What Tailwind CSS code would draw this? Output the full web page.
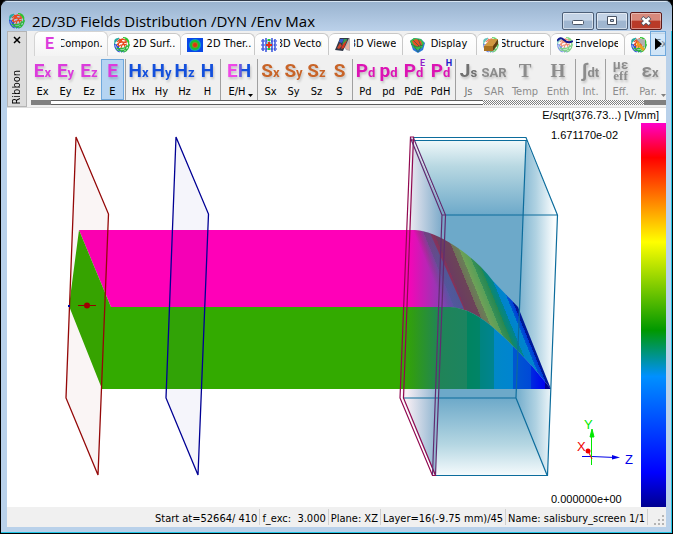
<!DOCTYPE html>
<html lang="en">
<head>
    <meta charset="UTF-8">
    <meta name="viewport" content="width=device-width, initial-scale=1.0">
    <title>2D/3D Fields Distribution</title>
    <script src="https://cdn.jsdelivr.net/npm/@tailwindcss/browser@4"></script>
</head>
<body class="bg-black">
    <!-- shared icons -->
    <svg class="hidden">
        <symbol id="mesh" viewBox="0 0 16 16">
            <g fill="none" stroke-width="1.2">
                <path d="M1 6Q0 2 4 1.500M1 5l4-4M0.500 8q0-4 3-5" stroke="#28a8a0"/>
                <path d="M9 .6q5 0 6 5M11 2q4 2 4 7" stroke="#2fc42f"/>
                <path d="M3 5Q7 0 12 3.500M3 8Q6 3 13 6M4 10Q8 6 13 8M5 2q5 3 6 8M9 2Q4 4 4 10M13 4Q8 6 7 11" stroke="#e8481c"/>
                <path d="M.7 7q0 6 5 8M2 7q1 5 6 8M4 9q1 5 6 6" stroke="#2a50d8"/>
                <path d="M15 7q0 6-5 8M13 8q-1 5-6 7M3 13q5 1 10-1M2 11q6 2 12-2" stroke="#2cb83c"/>
            </g>
        </symbol>
    </svg>

    <div class="min-h-screen flex flex-col rounded-t-lg border border-black border-t-[#303a48] bg-[#b9d1ea] shadow-[inset_-1px_-1px_0_#20c4e4] overflow-hidden font-['DejaVu_Sans_Condensed','DejaVu_Sans',sans-serif] text-[11px] text-black">

        <header class="h-[30px] shrink-0 flex items-center px-2 bg-linear-to-b from-[#9ab4d0] to-[#bbd1ea] border-t border-[#d6e4f2]">
            <svg class="w-4 h-4 mt-2 shrink-0"><use href="#mesh"/></svg>
            <h1 class="ml-[7px] mt-2 flex-1 whitespace-nowrap font-[Open_Sans] text-[15px] leading-5">2D/3D Fields Distribution /DYN /Env Max</h1>
            <div class="flex gap-[2px] mt-2 mr-[2px]">
                <button aria-label="Minimize" class="w-8 h-[18px] rounded-xs border border-[#4c5f78] bg-linear-to-b from-[#c3d3e6] from-45% to-[#9fb6d0] to-50% inset-ring inset-ring-white/50 flex items-center justify-center">
                    <svg class="w-3 h-3" viewBox="0 0 12 12"><rect x=".5" y="5.500" width="11" height="4" rx="1" fill="#fff" stroke="#4a5566"/></svg>
                </button>
                <button aria-label="Maximize" class="w-8 h-[18px] rounded-xs border border-[#4c5f78] bg-linear-to-b from-[#c3d3e6] from-45% to-[#9fb6d0] to-50% inset-ring inset-ring-white/50 flex items-center justify-center">
                    <svg class="w-3 h-3" viewBox="0 0 12 12"><path fill-rule="evenodd" d="M1.500 1.500h9v8h-9zM4.500 4.500v2h3v-2z" fill="#fff" stroke="#4a5566"/></svg>
                </button>
                <button aria-label="Close" class="w-8 h-[18px] rounded-xs border border-[#5c1a1a] bg-linear-to-b from-[#d8897c] from-45% to-[#b93a28] to-50% inset-ring inset-ring-white/40 flex items-center justify-center">
                    <svg class="w-3 h-3" viewBox="0 0 12 12"><path d="M2 2.500l8 7M10 2.500l-8 7" stroke="#4a5566" stroke-width="4"/><path d="M2.500 3l7 6M9.500 3l-7 6" stroke="#fff" stroke-width="2.600"/></svg>
                </button>
            </div>
        </header>

        <div class="flex-1 flex flex-col mx-[6px] mb-[6px] bg-[#f0f0f0]">

            <!-- ribbon -->
            <section class="flex shrink-0 h-[77px] border-b border-[#dcdcdc]">
                <div class="w-5 shrink-0 flex flex-col items-center justify-between border border-[#b4b4b4] bg-[#dcdcdc] pt-1 pb-px">
                    <button aria-label="Close ribbon" class="w-2 h-2">
                        <svg class="w-2 h-2" viewBox="0 0 8 8"><path d="M1 1l6 6M7 1L1 7" stroke="#000" stroke-width="1.500"/></svg>
                    </button>
                    <span class="[writing-mode:vertical-rl] rotate-180 leading-4">Ribbon</span>
                </div>

                <div class="flex-1 min-w-0 flex flex-col pl-1">
                    <nav class="relative h-[25px] pl-[3px] flex items-end overflow-hidden">
                        <button class="w-[74px] h-[25px] shrink-0 flex items-center rounded-t-md bg-linear-to-b from-white to-[#f4f4f4] border border-b-0 border-[#d4d4d4] pl-[10px]">
                            <span class="w-4 shrink-0 text-left font-[Roboto] font-bold text-base leading-4 text-[#dc3cdc]">E</span>
                            <span class="w-[42px] flex justify-center overflow-hidden whitespace-nowrap">Compon..</span>
                        </button>
                        <button class="w-[73px] h-[22px] mb-px shrink-0 flex items-center gap-[3px] rounded-t-md bg-linear-to-b from-white to-[#f8f8f8] border-r border-t border-[#c8c8c8] pl-[6px]">
                            <svg class="w-4 h-4 shrink-0"><use href="#mesh"/></svg>
                            <span class="w-[42px] flex justify-center overflow-hidden whitespace-nowrap">2D Surf..</span>
                        </button>
                        <button class="w-[74px] h-[22px] mb-px shrink-0 flex items-center gap-[3px] rounded-t-md bg-linear-to-b from-white to-[#f8f8f8] border-r border-t border-[#c8c8c8] pl-[6px]">
                            <svg class="w-4 h-4 shrink-0" viewBox="0 0 16 16">
                                <rect y="1" width="16" height="14" fill="#0848e8"/>
                                <circle cx="8" cy="8" r="6" fill="#10a0c0"/>
                                <circle cx="8" cy="8" r="5" fill="#18c030"/>
                                <circle cx="8" cy="8" r="3" fill="#a08020"/>
                                <circle cx="8" cy="8" r="2" fill="#e03010"/>
                            </svg>
                            <span class="w-[46px] flex justify-center overflow-hidden whitespace-nowrap">2D Ther..</span>
                        </button>
                        <button class="w-[74px] h-[22px] mb-px shrink-0 flex items-center gap-[3px] rounded-t-md bg-linear-to-b from-white to-[#f8f8f8] border-r border-t border-[#c8c8c8] pl-[6px]">
                            <svg class="w-4 h-4 shrink-0" viewBox="0 0 16 16" fill="none">
                                <path d="M2 2v12M5 1v14M11 1v14M14 2v12" stroke="#1838d8" stroke-width="1.300"/>
                                <path d="M0 4h16M0 12h16M0 8h16" stroke="#1838d8" stroke-dasharray="1.500 1"/>
                                <path d="M8 2v12" stroke="#20c840" stroke-width="3" stroke-dasharray="2 1"/>
                                <path d="M5 8h6M8 5v6" stroke="#e82818" stroke-width="1.800"/>
                            </svg>
                            <span class="w-[42px] flex justify-center overflow-hidden whitespace-nowrap">3D Vector</span>
                        </button>
                        <button class="w-[74px] h-[22px] mb-px shrink-0 flex items-center gap-[3px] rounded-t-md bg-linear-to-b from-white to-[#f8f8f8] border-r border-t border-[#c8c8c8] pl-[6px]">
                            <svg class="w-4 h-4 shrink-0" viewBox="0 0 16 16">
                                <path d="M4 1h11v13l-4-1z" fill="#b8b0b0"/>
                                <path d="M0 13L5 1h9L8 14z" fill="#303848"/>
                                <path d="M5 2h4L7 6 4 5z" fill="#3858d0"/>
                                <path d="M9 2h3l-1 4-4 2z" fill="#30a050"/>
                                <path d="M8 7l4-4-3 8-3 1z" fill="#d83820"/>
                                <path d="M2 11l3-5 2 3-3 3z" fill="#c84830"/>
                                <path d="M10 11l4-6v8z" fill="#e8b0a0"/>
                            </svg>
                            <span class="w-[42px] flex justify-center overflow-hidden whitespace-nowrap">3D Viewer</span>
                        </button>
                        <button class="w-[74px] h-[22px] mb-px shrink-0 flex items-center gap-[3px] rounded-t-md bg-linear-to-b from-white to-[#f8f8f8] border-r border-t border-[#c8c8c8] pl-[6px]">
                            <svg class="w-4 h-4 shrink-0" viewBox="0 0 16 16">
                                <path d="M1 4l4-3 7 1 4 4-2 7-5 3-5-3z" fill="#2878d8"/>
                                <path d="M1 4l4-3 7 1 3 4-2 5-5 2-4-3z" fill="#38c048"/>
                                <path d="M3 4l4-2 5 2 1 4-4 2-4-2z" fill="#e85028"/>
                                <path d="M2 7l6 3 6-2M4 3l6 6M9 2l3 7M5 9l4 6M12 10l-3 5" stroke="#286848" stroke-width=".7" fill="none"/>
                            </svg>
                            <span class="w-[42px] flex justify-center overflow-hidden whitespace-nowrap">Display</span>
                        </button>
                        <button class="w-[74px] h-[22px] mb-px shrink-0 flex items-center gap-[3px] rounded-t-md bg-linear-to-b from-white to-[#f8f8f8] border-r border-t border-[#c8c8c8] pl-[6px]">
                            <svg class="w-4 h-4 shrink-0" viewBox="0 0 16 16">
                                <use href="#mesh" opacity=".7"/>
                                <path d="M1 9l7-7 7 0-5 7z" fill="#d09840"/>
                                <path d="M1 9h9v5H1z" fill="#a87020"/>
                                <path d="M10 9l5-7v5l-5 7z" fill="#604010"/>
                            </svg>
                            <span class="w-[42px] flex justify-center overflow-hidden whitespace-nowrap">Structure</span>
                        </button>
                        <button class="w-[74px] h-[22px] mb-px shrink-0 flex items-center gap-[3px] rounded-t-md bg-linear-to-b from-white to-[#f8f8f8] border-r border-t border-[#c8c8c8] pl-[6px]">
                            <svg class="w-4 h-4 shrink-0" viewBox="0 0 16 16">
                                <use href="#mesh" opacity=".6"/>
                                <path d="M0 4q3-5 7-1t9 1" fill="none" stroke="#101890" stroke-width="1.800"/>
                            </svg>
                            <span class="w-[42px] flex justify-center overflow-hidden whitespace-nowrap">Envelope</span>
                        </button>
                        <button class="w-[74px] h-[22px] mb-px shrink-0 flex items-center gap-2 rounded-t-md bg-linear-to-b from-white to-[#f8f8f8] border-t border-[#c8c8c8] pl-[6px]">
                            <svg class="w-4 h-4 shrink-0" viewBox="0 0 16 16">
                                <use href="#mesh"/>
                                <path d="M5 2h9v9z" fill="#b0b0b0"/>
                                <path d="M6 4l8 8-2 2-5-5-2 4z" fill="#f0a020"/>
                            </svg>
                            <span class="whitespace-nowrap">Export</span>
                        </button>
                        <button aria-label="More tabs" class="absolute right-0 top-0 w-4 h-[25px] border border-[#6fa8dc] bg-[#b5d7f5]/60">
                            <svg class="w-3 h-3 ml-px" viewBox="0 0 12 12"><path d="M3 0l7 6-7 6z"/></svg>
                        </button>
                    </nav>

                    <div class="h-11 pt-[3px] flex items-stretch overflow-hidden text-center whitespace-nowrap [&_b]:block [&_b]:h-[25px] [&_b]:font-[Roboto] [&_b]:text-[19px] [&_b]:leading-6 [&_b]:drop-shadow-[1px_2px_1px_#00000030] [&_small]:text-[13px] [&_span]:leading-4">
                        <button class="w-[23px] shrink-0 text-[#dc3cdc]"><b>E<small>x</small></b><span class="text-black">Ex</span></button>
                        <button class="w-[23px] shrink-0 text-[#dc3cdc]"><b>E<small>y</small></b><span class="text-black">Ey</span></button>
                        <button class="w-[24px] shrink-0 text-[#dc3cdc]"><b>E<small>z</small></b><span class="text-black">Ez</span></button>
                        <button class="w-[23px] shrink-0 inset-ring inset-ring-[#6fa8dc] bg-[#b5d4f2] text-[#dc3cdc]"><b>E</b><span class="text-black">E</span></button>
                        <i class="w-px shrink-0 mx-px bg-[#a0a0a0]"></i>
                        <button class="w-[23px] shrink-0 text-[#1450dc]"><b>H<small>x</small></b><span class="text-black">Hx</span></button>
                        <button class="w-[23px] shrink-0 text-[#1450dc]"><b>H<small>y</small></b><span class="text-black">Hy</span></button>
                        <button class="w-[23px] shrink-0 text-[#1450dc]"><b>H<small>z</small></b><span class="text-black">Hz</span></button>
                        <button class="w-[23px] shrink-0 text-[#1450dc]"><b>H</b><span class="text-black">H</span></button>
                        <i class="w-px shrink-0 mx-px bg-[#a0a0a0]"></i>
                        <button class="relative w-[34px] shrink-0 text-[#1450dc]"><b class="bg-linear-to-r from-[#f048e8] from-40% to-[#1450dc] to-60% bg-clip-text text-transparent">EH</b><span class="text-black pr-1">E/H</span>
                            <svg class="absolute right-[3px] bottom-[3px] w-[5px] h-[3px]" viewBox="0 0 5 3"><path d="M0 0h5L2.500 3z"/></svg>
                        </button>
                        <i class="w-px shrink-0 mx-px bg-[#a0a0a0]"></i>
                        <button class="w-[23px] shrink-0 text-[#c86428]"><b>S<small>x</small></b><span class="text-black">Sx</span></button>
                        <button class="w-[23px] shrink-0 text-[#c86428]"><b>S<small>y</small></b><span class="text-black">Sy</span></button>
                        <button class="w-[23px] shrink-0 text-[#c86428]"><b>S<small>z</small></b><span class="text-black">Sz</span></button>
                        <button class="w-[23px] shrink-0 text-[#c86428]"><b>S</b><span class="text-black">S</span></button>
                        <i class="w-px shrink-0 mx-px bg-[#a0a0a0]"></i>
                        <button class="w-[23px] shrink-0 text-[#dc14b4]"><b>P<small>d</small></b><span class="text-black">Pd</span></button>
                        <button class="w-[23px] shrink-0 text-[#dc14b4]"><b>p<small>d</small></b><span class="text-black">pd</span></button>
                        <button class="relative w-[27px] shrink-0 text-[#dc14b4]"><b>P<small>d</small></b><span class="text-black">PdE</span>
                            <em class="absolute right-[2px] top-0 not-italic font-[Roboto] font-bold text-[9px] leading-2 text-[#9020c8]">E</em>
                        </button>
                        <button class="relative w-[27px] shrink-0 text-[#dc14b4]"><b>P<small>d</small></b><span class="text-black">PdH</span>
                            <em class="absolute right-[2px] top-0 not-italic font-[Roboto] font-bold text-[9px] leading-2 text-[#2020c8]">H</em>
                        </button>
                        <i class="w-px shrink-0 mx-px bg-[#a0a0a0]"></i>
                        <button disabled class="w-[23px] shrink-0 text-[#707070]"><b>J<small>s</small></b><span>Js</span></button>
                        <button disabled class="w-[28px] shrink-0 text-[#8c8c8c]"><b><small>SAR</small></b><span>SAR</span></button>
                        <button disabled class="w-[34px] shrink-0 text-[#8c8c8c]"><b><tt class="font-[Liberation_Serif]">T</tt></b><span>Temp</span></button>
                        <button disabled class="w-[32px] shrink-0 text-[#8c8c8c]"><b><tt class="font-[Liberation_Serif]">H</tt></b><span>Enth</span></button>
                        <i class="w-px shrink-0 mx-px bg-[#a0a0a0]"></i>
                        <button disabled class="w-[27px] shrink-0 text-[#8c8c8c]"><b>∫<small>dt</small></b><span>Int.</span></button>
                        <i class="w-px shrink-0 mx-px bg-[#a0a0a0]"></i>
                        <button disabled class="w-[27px] shrink-0 text-[#8c8c8c]"><b><small class="block leading-[11px]">με</small><small class="block leading-[11px] font-[Liberation_Serif]">eff</small></b><span>Eff.</span></button>
                        <button disabled class="relative w-[32px] shrink-0 text-[#8c8c8c]"><b>ε<small>x</small></b><span class="pr-1">Par.</span>
                            <svg class="absolute right-0 bottom-[3px] w-[5px] h-[3px]" viewBox="0 0 5 3"><path d="M0 0h5L2.500 3z" fill="#808080"/></svg>
                        </button>
                    </div>

                    <div class="h-[5px] flex bg-[#808080]">
                        <div class="flex-1 ml-5 bg-white border-y border-[#606060]"></div>
                        <div class="w-[161px] mr-[22px] bg-[repeating-conic-gradient(#808080_0_25%,#ffffff_0_50%)] bg-size-[2px_2px]"></div>
                    </div>
                </div>
            </section>

            <!-- 3D view -->
            <main class="relative flex-1 flex justify-end bg-white overflow-hidden font-['Liberation_Sans',Arial,sans-serif]">
                <svg class="absolute inset-0 w-full h-full" viewBox="7 108 659 399" preserveAspectRatio="xMidYMid meet">
                    <defs>
                        <linearGradient id="fogTop" x2="0" y2="1"><stop stop-color="#f0f8fa"/><stop offset=".35" stop-color="#b8d8e2"/><stop offset="1" stop-color="#6da9c9"/></linearGradient>
                        <linearGradient id="fogBottom" x2="0" y2="1"><stop stop-color="#6da9c9"/><stop offset=".6" stop-color="#b4d6e2"/><stop offset="1" stop-color="#f4fafc"/></linearGradient>
                        <linearGradient id="fogLeft" gradientUnits="userSpaceOnUse" x1="407" x2="443" y1="0" y2="0"><stop stop-color="#f6eef4"/><stop offset="1" stop-color="#78a8c8"/></linearGradient>
                        <linearGradient id="fogRight" gradientUnits="userSpaceOnUse" x1="518" x2="554" y1="0" y2="0"><stop stop-color="#78b0ce"/><stop offset=".5" stop-color="#b0d2e2"/><stop offset="1" stop-color="#fafdfe"/></linearGradient>
                        <linearGradient id="tint" gradientUnits="userSpaceOnUse" x1="406" x2="448" y1="0" y2="0"><stop stop-color="#3868b0" stop-opacity="0"/><stop offset="1" stop-color="#3868b0" stop-opacity=".7"/></linearGradient>
                        <!-- top of the field sheet, bands run along the depth axis -->
                        <linearGradient id="sheet" gradientUnits="userSpaceOnUse" x1="413" x2="493" y1="0" y2="0" gradientTransform="translate(-94.400 0) skewX(22.300)">
                            <stop stop-color="#ff00b8"/>
                            <stop offset=".06" stop-color="#d81090"/><stop offset=".12" stop-color="#a82888"/>
                            <stop offset=".12" stop-color="#903070"/><stop offset=".25" stop-color="#803458"/>
                            <stop offset=".25" stop-color="#6c3c60"/><stop offset=".4" stop-color="#6c4458"/>
                            <stop offset=".4" stop-color="#707058"/><stop offset=".48" stop-color="#688058"/>
                            <stop offset=".48" stop-color="#70a058"/><stop offset=".58" stop-color="#58a058"/>
                            <stop offset=".58" stop-color="#389058"/><stop offset=".66" stop-color="#288850"/>
                            <stop offset=".66" stop-color="#108868"/><stop offset=".74" stop-color="#008490"/>
                            <stop offset=".74" stop-color="#0084c8"/><stop offset=".83" stop-color="#0084d0"/>
                            <stop offset=".83" stop-color="#0058d0"/><stop offset=".88" stop-color="#0038d8"/>
                            <stop offset=".88" stop-color="#001898"/>
                        </linearGradient>
                        <linearGradient id="side" gradientUnits="userSpaceOnUse" x1="401" x2="551" y1="0" y2="0">
                            <stop stop-color="#33aa00"/><stop offset=".08" stop-color="#309c14"/><stop offset=".26" stop-color="#208458"/>
                            <stop offset=".44" stop-color="#1c8460"/><stop offset=".44" stop-color="#008460"/>
                            <stop offset=".53" stop-color="#008468"/><stop offset=".53" stop-color="#008480"/>
                            <stop offset=".62" stop-color="#008490"/><stop offset=".62" stop-color="#0088c8"/>
                            <stop offset=".75" stop-color="#0084d0"/><stop offset=".75" stop-color="#0058d0"/>
                            <stop offset=".87" stop-color="#0048d8"/><stop offset=".87" stop-color="#0028e0"/>
                            <stop offset=".96" stop-color="#0000f0"/><stop offset=".96" stop-color="#000090"/>
                        </linearGradient>
                    </defs>

                    <!-- dielectric box -->
                    <path d="M414 140H526L557 215H445z" fill="url(#fogTop)"/>
                    <path d="M445 215H524L516 398H403z" fill="#6da9c9"/>
                    <path d="M403 398H516L547 475H435z" fill="url(#fogBottom)"/>
                    <path d="M412 138L445 215 435 475 402 398z" fill="url(#fogLeft)"/>
                    <path d="M526 140L557 215 547 475 516 398z" fill="url(#fogRight)"/>

                    <!-- field sheet -->
                    <path d="M79 230H415Q432 231 455 246T493 281L518 307 551 389 532 366Q514 346 497 331 472 308 450 307H111z" fill="url(#sheet)"/>
                    <path d="M408 230H415Q422 230 430 233L464 309 450 307H405z" fill="url(#tint)"/>
                    <path d="M79 230L111 307H450Q472 308 497 331 514 346 532 366L551 389H102L69 306z" fill="url(#side)"/>

                    <!-- box outlines -->
                    <g fill="none" stroke="#0c6c9c" stroke-width="1.200">
                        <path d="M414 137.500H526L557.500 215 547.500 475.500H435M414 140.500H526L516 398H403M445 215H557M516 398L547 475"/>
                    </g>
                    <g fill="none" stroke="#900850" stroke-width="1.200">
                        <path d="M410.500 137L400 398 432.500 475.500H435.500L403.500 398 413.500 137zM410 140H414"/>
                        <path d="M410.500 138L442 215 432.500 475M413.500 138L445.500 215 435.500 475M442 215h4" stroke="#602c70"/>
                    </g>

                    <!-- reference planes -->
                    <path d="M76 137L108.500 214 98 475 66 398z" fill="#8c0000" fill-opacity=".04" stroke="#940808" stroke-width="1.300"/>
                    <path d="M176 137L208.500 214 198 475 166 398z" fill="#000090" fill-opacity=".04" stroke="#000094" stroke-width="1.300"/>
                    <path d="M78 305.500H96" stroke="#940000"/><circle cx="87" cy="305.500" r="3" fill="#a00000"/>
                    <path d="M68 306h2" stroke="#0000a0" stroke-width="2"/>

                    <!-- axes -->
                    <path d="M582 456.500H592L615 457.500" stroke="#0000e8" fill="none"/><path d="M612 455l8 2.500-8 2z" fill="#0000e8"/>
                    <path d="M591.500 465V434" stroke="#00e800"/><path d="M592 429l2 8h-4z" fill="#00e800" stroke="#00e800"/>
                    <path d="M592 459L588 451" stroke="#f00000"/><circle cx="588" cy="451" r="2.500" fill="#f00000"/>
                    <g font-size="13"><text x="584" y="429" fill="#00e800">Y</text><text x="577" y="451" fill="#f00000">X</text><text x="625" y="464" fill="#0000e8">Z</text></g>
                </svg>

                <aside class="relative w-[124px] flex flex-col">
                    <p class="h-[15px] pr-[7px] text-right leading-[14px] whitespace-nowrap">E/sqrt(376.73...) [V/mm]</p>
                    <div class="flex-1 flex justify-between pl-[9px]">
                        <div class="flex flex-col justify-between pt-1 pb-[2px]">
                            <span class="leading-4">1.671170e-02</span>
                            <span class="leading-3">0.000000e+00</span>
                        </div>
                        <div class="w-[25px] bg-[linear-gradient(#ff00c8,#ff0000_9%,#ffff00_31%,#009800_54%,#0090ff_66%,#0000ff_91%,#000090)]"></div>
                    </div>
                </aside>
            </main>

            <footer class="h-5 shrink-0 flex items-center justify-end whitespace-nowrap">
                <span class="h-4 leading-5 px-[2px] border-r border-[#d0d0d0]">Start at=52664/ 410</span>
                <span class="h-4 leading-5 px-[2px] border-r border-[#d0d0d0] whitespace-pre">f_exc:  3.000</span>
                <span class="h-4 leading-5 px-[2px] border-r border-[#d0d0d0]">Plane: XZ</span>
                <span class="h-4 leading-5 px-[2px] border-r border-[#d0d0d0]">Layer=16(-9.75 mm)/45</span>
                <span class="h-4 leading-5 px-[2px] border-r border-[#d0d0d0]">Name: salisbury_screen 1/1</span>
                <svg class="w-[18px] h-5" viewBox="0 0 18 20"><path d="M14 8h2v2h-2zM14 12h2v2h-2zM14 16h2v2h-2zM10 12h2v2h-2zM10 16h2v2h-2zM6 16h2v2H6z" fill="#b4b4b4"/></svg>
            </footer>
        </div>
    </div>
</body>
</html>
